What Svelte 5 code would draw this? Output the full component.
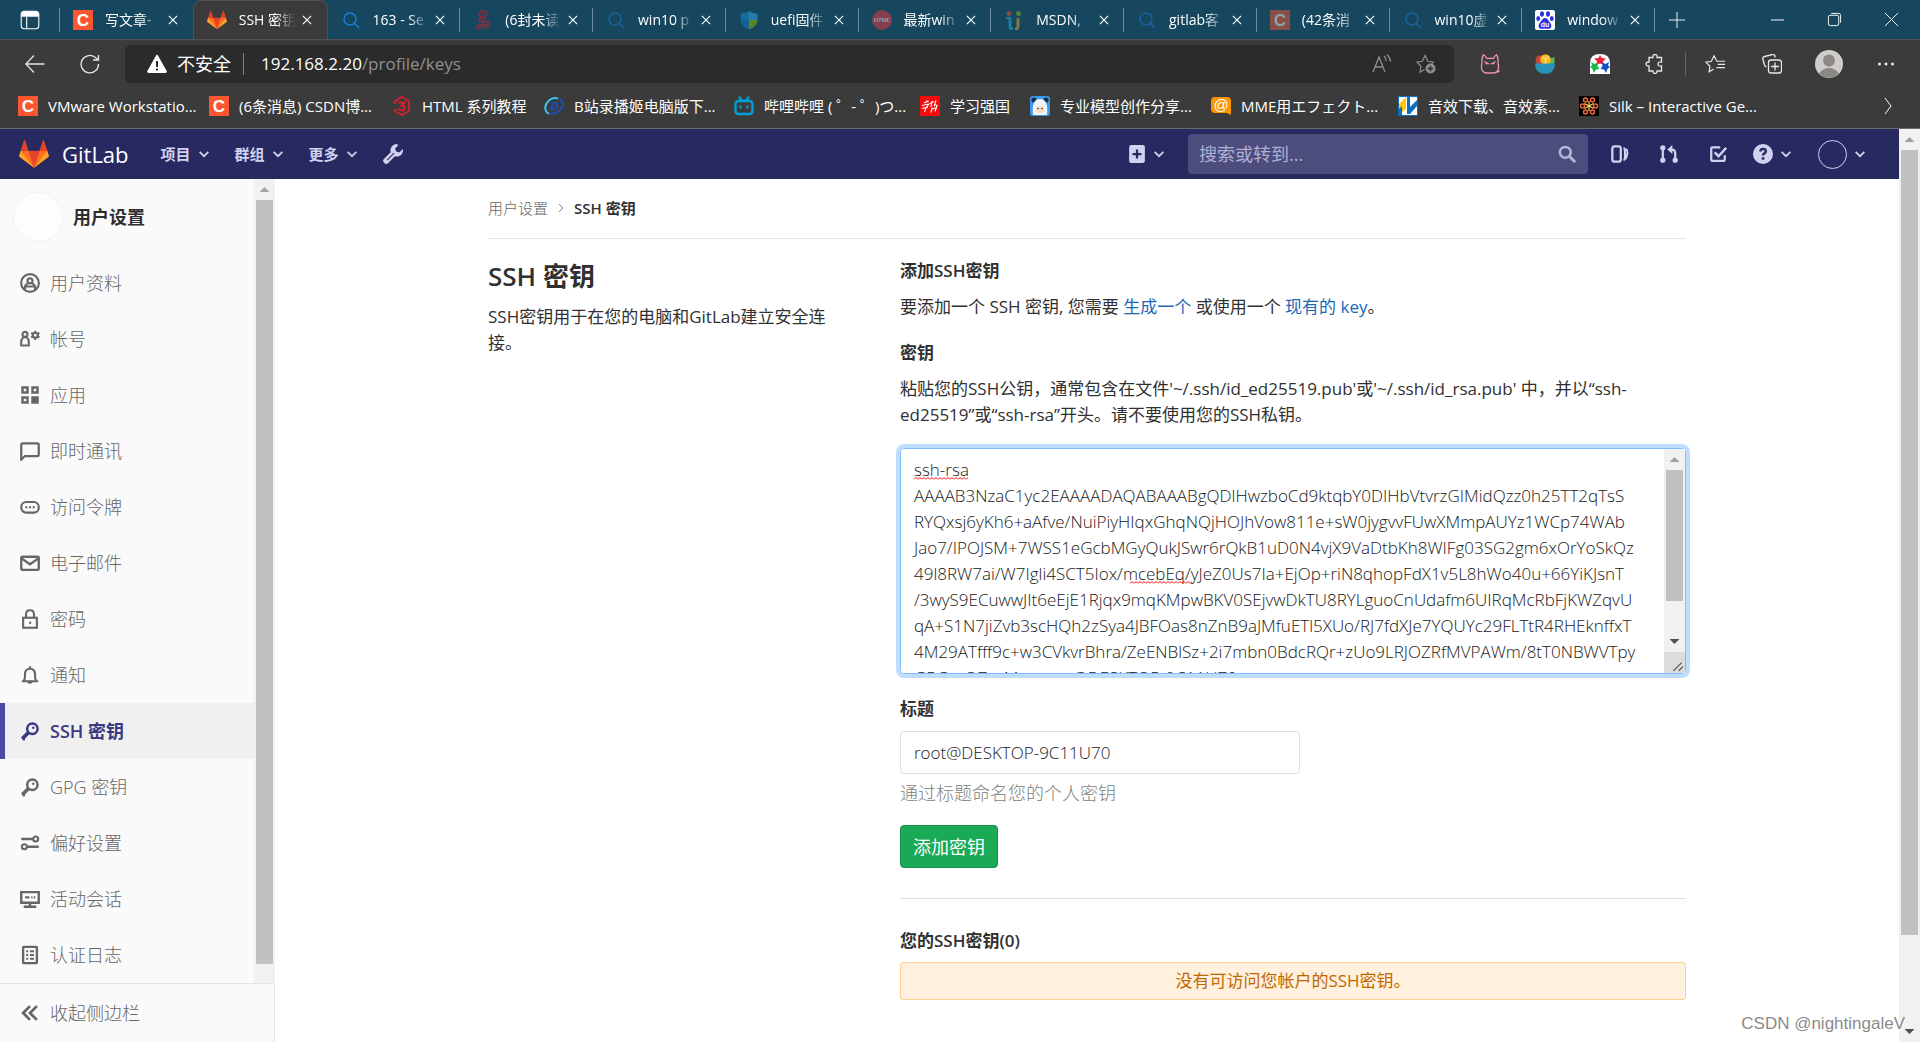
<script lang="ts">
  const tanuki = `
    <path fill="#e24329" d="M2 14l9.38 9v-9l-4-12.28c-.2-.63-1.18-.63-1.38 0zM34 14l-9.38 9v-9l4-12.28c.2-.63 1.18-.63 1.38 0zM18 34.38L3 14h30z"/>
    <path fill="#fc6d26" d="M18 34.38L11.38 14H2l4 11zM18 34.38L24.62 14H34l-4 11z"/>
    <path fill="#fca326" d="M2 14L.1 20.16c-.18.56 0 1.2.5 1.56L18 34.38zM34 14l1.9 6.16c.18.56 0 1.2-.5 1.56L18 34.38z"/>`;

  const csdn = `
    <rect width="20" height="20" fill="#fc5531"/>
    <text x="10" y="16" font-size="17" font-weight="700" text-anchor="middle" fill="#fff">C</text>`;

  const magnifier = `<g fill="none" stroke="#1a7fe0" stroke-width="1.4"><circle cx="9" cy="9" r="6"/><path d="M13.500 13.500L18 18"/></g>`;

  // 20x20 site icons
  const favicons: Record<string, string> = {
    csdn,
    search: magnifier,
    netease: `<g fill="none" stroke="#e01b26" stroke-width="2"><circle cx="10" cy="4.500" r="3.600"/><path d="M11 4.500H9M12 7.500c-6-1-8 4-3 4h5c4 0 3 4-1 3.500H7c-4 0-4 4 0 4M10 12c1 3 0 5-2 7M15 14c0 3-1 4-3 5"/></g>`,
    shield: `<path fill="#1a8fd8" d="M10 1C7 3 4 3.500 1.500 3.500V10H10z"/><path fill="#2fb0f0" d="M10 1c3 2 6 2.500 8.500 2.500V10H10z"/><path fill="#147ac4" d="M1.500 10c.5 5 4 8 8.500 9.500V10z"/><path fill="#9bc400" d="M18.500 10c-.5 5-4 8-8.500 9.500V10z"/>`,
    html: `<circle cx="10" cy="10" r="10" fill="#f0383c"/><text x="10" y="12" font-size="6" font-weight="700" font-style="italic" text-anchor="middle" fill="#fff">HTML</text>`,
    msdn: `<g fill="none" stroke-width="3"><path stroke="#29b6d8" d="M6 8v8c0 2 1 3 3 3"/><path stroke="#e0b020" d="M14 8v8c0 2-1 3-3 3"/></g><circle cx="5" cy="3.500" r="2.500" fill="#e2562b"/><circle cx="14.500" cy="3.500" r="2.500" fill="#7dbb2b"/><path stroke="#29b6d8" stroke-width="2" d="M2 8h5"/>`,
    baidu: `<rect width="20" height="20" rx="2" fill="#fff"/><g fill="#2932e1"><ellipse cx="7" cy="4" rx="2" ry="2.800"/><ellipse cx="13" cy="4" rx="2" ry="2.800"/><ellipse cx="3.200" cy="8.500" rx="1.900" ry="2.500"/><ellipse cx="16.800" cy="8.500" rx="1.900" ry="2.500"/><path d="M10 8c2 0 3 2 4.500 4s2.500 3 1.500 5.500c-1 2-4 1-6 1s-5 1-6-1C3 15 4 14 5.500 12S8 8 10 8z"/></g><text x="10" y="17" font-size="7" font-weight="700" text-anchor="middle" fill="#fff">du</text>`,
    series: `<path fill="none" stroke="#cf2230" stroke-width="2" d="M3 8V5L10 1l7 4v10l-7 4-7-4v-2"/><path fill="none" stroke="#cf2230" stroke-width="2" d="M6 6.500h6.500L9.500 9.500c4 0 4 5 0 5L6 13"/>`,
    recorder: `<g fill="none"><path stroke="#3cc0ee" stroke-width="2" d="M5 18C0 15 0 9 5 4.500c3-3 7-3 9-2"/><path stroke="#1d4fb0" stroke-width="2" d="M15 2.500c5 3 5 8 0 12.500-3 3-6 3-8 2M9 7l4-.5c1 3-1 6.500-3.500 6.500H7z"/></g>`,
    bilibili: `<g fill="none" stroke="#00a1d6" stroke-width="2.400" stroke-linecap="round"><rect x="1.500" y="5" width="17" height="13" rx="3"/><path d="M5.500 1.500L8 4.500M14.500 1.500L12 4.500"/></g><path stroke="#00a1d6" stroke-width="2" d="M6.500 9.500v3M13.500 9.500v3"/>`,
    xuexi: `<rect width="20" height="20" fill="#f40b0b"/><g stroke="#fff" stroke-width="1.100" fill="none"><path d="M4 7l5-2M7 4.500L6 6M2 9.500l7-1.500-3 4-1.500 4M2 12.500l6-1.500M12 5l-1 6M10 7.500l4-2M16 4.500l-2 6M11 13.500l6-2M12 11.500l-1 5M15 8.500l2 1-2 6"/></g>`,
    model: `<rect width="20" height="20" rx="3" fill="#3c9ae8"/><circle cx="4" cy="4" r="2.600" fill="#17314e"/><circle cx="16" cy="4" r="2.600" fill="#17314e"/><path fill="#eef6fb" d="M3 19C2 8 4 3 10 3s8 5 7 16z"/><path fill="#f7dcc9" d="M6 10h8v5c-2 3-6 3-8 0z"/><path stroke="#6b4a3f" d="M7 12.500h2M11 12.500h2"/>`,
    mme: `<path fill="#fb9500" d="M4 1h12q4 0 4 4v14l-4-2H4q-4 0-4-4V5q0-4 4-4z"/><text x="10" y="14" font-size="15" text-anchor="middle" fill="#fff">@</text>`,
    audio: `<rect width="20" height="20" fill="#fff"/><path fill="#ffc80a" d="M1 8l7-7v12l-7 6z"/><path fill="#0a6ebd" d="M9 1h3v17H9zM12 11l7-7v6l-7 8zM0 0h20v1H0zM0 19h20v1H0zM0 0h1v20H0zM19 0h1v20h-1zM1 13l3-3v9H1z"/>`,
    silk: `<rect width="20" height="20" fill="#000"/><g fill="none" stroke="#f0683a" stroke-width="1.500"><circle cx="6.500" cy="4" r="2"/><circle cx="13.500" cy="4" r="2"/><circle cx="3.500" cy="10" r="2"/><circle cx="16.500" cy="10" r="2"/><circle cx="6.500" cy="16" r="2"/><circle cx="13.500" cy="16" r="2"/></g><path stroke="#ffd75e" stroke-width="1.200" d="M10 5v10M5.500 7.500l9 5M14.500 7.500l-9 5"/>`,
  };

  // 16x16 line icons, drawn in the current colour
  const icons: Record<string, string> = {
    close: `<path d="M2.500 2.500l11 11M13.500 2.500l-11 11"/>`,
    chevron: `<path stroke-width="2" d="M3 5.500l5 5 5-5"/>`,
    wrench: `<path fill="currentColor" stroke="none" fill-rule="evenodd" d="M10.700 0a5 5 0 0 0-4.500 6.500L.9 11.800a2.300 2.300 0 0 0 3.300 3.300l5.300-5.300A5 5 0 0 0 15.900 4L13 6.800 10.500 6 9.700 3.500 12.300.8A5 5 0 0 0 10.700 0zM3 12.500l5.500-5.500.6.6L3.600 13.100z"/>`,
    plus: `<path fill="currentColor" stroke="none" fill-rule="evenodd" d="M3 0h10a2 2 0 0 1 2 2v12a2 2 0 0 1-2 2H3a2 2 0 0 1-2-2V2a2 2 0 0 1 2-2zM7 4v3H4v2h3v3h2V9h3V7H9V4z"/>`,
    search: `<circle cx="6.500" cy="6.500" r="4.800" stroke-width="2.200"/><path stroke-width="2.600" stroke-linecap="round" d="M10.500 10.500l4 4"/>`,
    issues: `<rect x="1.200" y="1.200" width="7.500" height="13.600" rx="2" stroke-width="2"/><path stroke-width="2" d="M11 3q1.500 0 1.500 2v6q0 2-1.500 2"/><path stroke-width="1.600" d="M13.500 3.500q1.800 2 .8 5.500l-1.300 3.500"/>`,
    merge: `<circle cx="2.500" cy="2.500" r="1.500" fill="currentColor"/><circle cx="2.500" cy="13.500" r="1.500" fill="currentColor"/><circle cx="13.500" cy="13.500" r="1.500" fill="currentColor"/><path stroke-width="2" d="M2.500 3v10M13.500 13V7q0-3-3-3H9"/><path fill="currentColor" stroke="none" d="M11 0v8L6.500 4z"/>`,
    todo: `<path stroke-width="2" d="M10 2H3q-1 0-1 1v10q0 1 1 1h10q1 0 1-1V9"/><path stroke-width="2.200" d="M5 6.500l3.500 3.500L15.300 2.500"/>`,
    help: `<path fill="currentColor" stroke="none" fill-rule="evenodd" d="M8 0a8 8 0 1 1 0 16A8 8 0 0 1 8 0zM5 6h2q0-1.200 1-1.200 1.200 0 1.200 1 0 .7-1 1.200-1.200.6-1.200 2.200h2q0-.8 1-1.300 1.200-.7 1.200-2.200Q11.200 3 8 3 5 3 5 6zM8 10.300a1.200 1.200 0 1 0 .1 0z"/>`,
    profile: `<circle cx="8" cy="8" r="7.100"/><circle cx="8" cy="6.300" r="2"/><path d="M4 13.500V11q0-1 1-1.800L6.500 8M12 13.500V11q0-1-1-1.800L9.500 8M4 10.800h8"/>`,
    account: `<circle cx="4" cy="4.300" r="2"/><path d="M1 13.200V9.500q0-2 3-3.200 3 1.200 3 3.200v3.700z"/><circle cx="12.200" cy="5" r="2"/><path stroke-width="1.600" d="M12.200 1.300v1.700M12.200 7v1.700M9 3.200l1.500.8M14 6l1.500.8M9 6.800l1.500-.8M14 4l1.500-.8"/>`,
    apps: `<g stroke-width="2"><rect x="2" y="2" width="4" height="4"/><rect x="10" y="2" width="4" height="4"/><rect x="2" y="10" width="4" height="4"/><rect x="10" y="10" width="4" height="4" fill="currentColor"/></g>`,
    chat: `<path stroke-width="1.800" d="M1 14.800V3q0-1.200 1.200-1.200h11.600q1.200 0 1.200 1.200v7.800q0 1.200-1.200 1.200H4z"/>`,
    token: `<rect x="1" y="4" width="14" height="8.500" rx="4"/><path stroke-width="1.600" d="M4.200 8.200h1.600M7.200 8.200h1.600M10.200 8.200h1.600"/>`,
    mail: `<rect x="1" y="3" width="14" height="10.500" rx="1" stroke-width="1.900"/><path stroke-width="1.900" d="M1.500 4.500L8 9l6.500-4.500"/>`,
    lock: `<rect x="2.500" y="7" width="11" height="8"/><path d="M4.800 7V4.500q0-3.500 3.200-3.500t3.200 3.500V7M7.200 11h1.800"/>`,
    bell: `<path d="M1.500 13h13M3 12.500q1-1 1-5Q4 3 8 3t4 4.500q0 4 1 5M8 1v2"/><path fill="currentColor" stroke="none" d="M5.500 13h5q-.5 2-2.500 2t-2.500-2z"/>`,
    key: `<circle cx="9.900" cy="6.200" r="4.200" stroke-width="2"/><path stroke-width="3" d="M6.800 9.200L1.800 14.200"/><path stroke-width="2" d="M3 12.200v3.300"/><circle cx="10.600" cy="5.400" r="1" fill="currentColor" stroke="none"/>`,
    sliders: `<circle cx="12.500" cy="4.800" r="2"/><circle cx="3.500" cy="11" r="2"/><path stroke-width="2" d="M1 4.800h9.500M5.500 11H15"/>`,
    monitor: `<path stroke-width="1.900" d="M1 2.500h14v8.500H1zM8 11v3M3 14.200h10M4 6.700h3.500M9 6.700h1M11 6.700h1.200"/>`,
    log: `<rect x="2.500" y="1.500" width="11" height="13" rx=".5" stroke-width="1.900"/><path stroke-width="1.600" d="M5 5h1.600M5 8h1.600M5 11h1.600M8 5h3.200M8 8h3.200M8 11h3.200"/>`,
    collapse: `<path stroke-width="2.200" d="M8 2.500L2.500 8 8 13.500M13.500 2.500L8 8l5.500 5.500"/>`,
  };

  const tabs = [
    { title: '写文章-', icon: 'csdn' },
    { title: 'SSH 密钥', icon: 'gitlab', active: true },
    { title: '163 - Se', icon: 'search' },
    { title: '(6封未读', icon: 'netease', dim: true },
    { title: 'win10 p', icon: 'search', dim: true },
    { title: 'uefi固件', icon: 'shield', dim: true },
    { title: '最新win', icon: 'html', dim: true },
    { title: 'MSDN,', icon: 'msdn', dim: true },
    { title: 'gitlab客', icon: 'search', dim: true },
    { title: '(42条消', icon: 'csdn', dim: true },
    { title: 'win10虚', icon: 'search', dim: true },
    { title: 'window', icon: 'baidu' },
  ];

  const bookmarks = [
    { title: 'VMware Workstatio...', icon: 'csdn', width: 191 },
    { title: '(6条消息) CSDN博...', icon: 'csdn', width: 183 },
    { title: 'HTML 系列教程', icon: 'series', width: 152 },
    { title: 'B站录播姬电脑版下...', icon: 'recorder', width: 190 },
    { title: '哔哩哔哩 ( ゜- ゜)つ...', icon: 'bilibili', width: 186 },
    { title: '学习强国', icon: 'xuexi', width: 110 },
    { title: '专业模型创作分享...', icon: 'model', width: 181 },
    { title: 'MME用エフェクト...', icon: 'mme', width: 187 },
    { title: '音效下载、音效素...', icon: 'audio', width: 181 },
    { title: 'Silk – Interactive Ge...', icon: 'silk', width: 181 },
  ];

  const menus = ['项目', '群组', '更多'];

  const sections = [
    { label: '用户资料', icon: 'profile' },
    { label: '帐号', icon: 'account' },
    { label: '应用', icon: 'apps' },
    { label: '即时通讯', icon: 'chat' },
    { label: '访问令牌', icon: 'token' },
    { label: '电子邮件', icon: 'mail' },
    { label: '密码', icon: 'lock' },
    { label: '通知', icon: 'bell' },
    { label: 'SSH 密钥', icon: 'key', active: true },
    { label: 'GPG 密钥', icon: 'key' },
    { label: '偏好设置', icon: 'sliders' },
    { label: '活动会话', icon: 'monitor' },
    { label: '认证日志', icon: 'log' },
  ];

  let key = $state(
    [
      'ssh-rsa',
      'AAAAB3NzaC1yc2EAAAADAQABAAABgQDlHwzboCd9ktqbY0DIHbVtvrzGIMidQzz0h25TT2qTsS',
      'RYQxsj6yKh6+aAfve/NuiPiyHIqxGhqNQjHOJhVow811e+sW0jygvvFUwXMmpAUYz1WCp74WAb',
      'Jao7/IPOJSM+7WSS1eGcbMGyQukJSwr6rQkB1uD0N4vjX9VaDtbKh8WIFg03SG2gm6xOrYoSkQz',
      '49l8RW7ai/W7Igli4SCT5Iox/mcebEq/yJeZ0Us7Ia+EjOp+riN8qhopFdX1v5L8hWo40u+66YiKJsnT',
      '/3wyS9ECuwwJIt6eEjE1Rjqx9mqKMpwBKV0SEjvwDkTU8RYLguoCnUdafm6UIRqMcRbFjKWZqvU',
      'qA+S1N7jiZvb3scHQh2zSya4JBFOas8nZnB9aJMfuETl5XUo/RJ7fdXJe7YQUYc29FLTtR4RHEknffxT',
      '4M29ATfff9c+w3CVkvrBhra/ZeENBlSz+2i7mbn0BdcRQr+zUo9LRJOZRfMVPAWm/8tT0NBWVTpy',
      'GRGzcQZxzMs= root@DESKTOP-9C11U70',
    ].join('\n')
  );
  let title = $state('root@DESKTOP-9C11U70');
  let query = $state('');
</script>

{#snippet icon(name: string)}
  <svg class="icon {name}" viewBox="0 0 16 16" aria-hidden="true">{@html icons[name]}</svg>
{/snippet}

{#snippet favicon(name: string)}
  {#if name === 'gitlab'}
    <svg class="favicon" viewBox="0 0 36 36" aria-hidden="true">{@html tanuki}</svg>
  {:else}
    <svg class="favicon" viewBox="0 0 20 20" aria-hidden="true">{@html favicons[name]}</svg>
  {/if}
{/snippet}

<div class="window">
  <div class="tab-bar">
    <button class="tab-menu" aria-label="Tab actions">
      <svg viewBox="0 0 20 20"><rect x="2" y="2" width="16" height="16" rx="3" /><path d="M7 7v11" /><path class="solid" d="M2 7V5q0-3 3-3h10q3 0 3 3v2z" /></svg>
    </button>
    <div class="tabs">
      {#each tabs as tab}
        <div class="tab" class:active={tab.active} class:dim={tab.dim}>
          {@render favicon(tab.icon)}
          <span class="tab-title">{tab.title}</span>
          <button class="tab-close" aria-label="Close tab">{@render icon('close')}</button>
        </div>
      {/each}
    </div>
    <button class="new-tab" aria-label="New tab">
      <svg viewBox="0 0 20 20"><path d="M10 1v18M1 10h18" /></svg>
    </button>
    <div class="window-controls">
      <button aria-label="Minimize"><svg viewBox="0 0 16 16"><path d="M1 8.500h14" /></svg></button>
      <button aria-label="Restore"><svg viewBox="0 0 16 16"><rect x="1.500" y="3.500" width="11" height="11" rx="2" /><path d="M4.500 1.500h8q2 0 2 2v8" /></svg></button>
      <button aria-label="Close"><svg viewBox="0 0 16 16"><path d="M1 1l14 14M15 1L1 15" /></svg></button>
    </div>
  </div>

  <div class="toolbar">
    <button aria-label="Back"><svg viewBox="0 0 20 20"><path d="M19.500 10H1M9 1.500L.8 10 9 18.500" /></svg></button>
    <button aria-label="Reload"><svg viewBox="0 0 20 20"><path d="M18.500 10A8.700 8.700 0 1 1 15 3.200L17.500 5M18.500 1v5h-5.500" /></svg></button>
    <div class="address">
      <svg class="warning" viewBox="0 0 20 20"><path d="M9 1.500q1-1.500 2 0l8.700 15.500q.6 1.700-1.200 2h-17q-1.800-.3-1.200-2z" /><path class="mark" d="M10 7v6M10 14.500v2" /></svg>
      <span class="insecure">不安全</span>
      <span class="url"><b>192.168.2.20</b>/profile/keys</span>
      <button aria-label="Read aloud"><svg viewBox="0 0 20 20"><path d="M1 18L7 3l6 15M3 13h8M12 2q2 2 2 5M15 .8q3.500 3 3.500 7" /></svg></button>
      <button aria-label="Add to favorites">
        <svg viewBox="0 0 22 22"><path d="M9.500 17l-5 3 1-6.500L1 9l6-1 3-6.500L13 8l6 1-1.500 1.500" /><circle class="solid" cx="16" cy="16" r="5.500" /><path class="dark" d="M16 13v6M13 16h6" /></svg>
      </button>
    </div>
    <div class="extensions">
      <button aria-label="Cat extension">
        <svg viewBox="0 0 20 20"><path stroke="#f093ae" d="M2 9Q1.500 3 3.500.8q2 .7 3 3.500h7q1-2.800 3-3.500Q18.500 3 18 9q2 9-4 10H6Q0 18 2 9zM4.500 7.500l3.500 2H5.500M15.500 7.500l-3.500 2h2.500M17 18q2 0 2.500-1.500" /></svg>
      </button>
      <button aria-label="Salad extension">
        <svg viewBox="0 0 20 20"><g stroke="none"><circle cx="5" cy="6" r="4.600" fill="#c8453a" /><path fill="#5cb84a" d="M14 10V5l5.500-2q.5 4-.5 7z" /><circle cx="10.500" cy="5.500" r="5.300" fill="#f7b71d" /><path fill="#2793b8" d="M0 9.500h20q0 7-6 10H6Q0 16.500 0 9.500z" /></g><path stroke="#fbe08a" d="M10.500 5.500l3-3M10.500 5.500L8 3M10.500 5.500v4" /></svg>
      </button>
      <button aria-label="Star extension">
        <svg viewBox="0 0 20 20"><g stroke="none"><path fill="#fff" d="M0 20V9q0-9 10-9t10 9v11z" /><path fill="#f0203c" d="M10 1l1.800 3 4.200.5-3 3 1 3.500-4-1.500L6.500 11l.5-4-3-2.500L8.500 4z" /><path fill="#14b84c" d="M1 8l3.500 2L8 8.500 7.500 12l2 3-3.500.5L4 19l-1.500-4L0 13l2-1.500z" /><path fill="#1450c8" d="M19 8l-3.500 2L12 8.500l.5 3.500-2 3 3.500.5L16 19l1.500-4 2.500-2-2-1.500z" /></g></svg>
      </button>
      <button aria-label="Extensions">
        <svg viewBox="0 0 20 20"><path d="M4 3.500h4q-.5-3 2-3t2 3h4.500V8q-3.500-.5-3.500 2t3.500 2v5H12q0 2.500-2 2.500T8 17H4v-5q-3 0-3-2t3-2z" /></svg>
      </button>
    </div>
    <div class="tools">
      <button aria-label="Favorites">
        <svg viewBox="0 0 22 20"><path d="M9.500 15.500l-5 3 1-6L1 8l6-1 3-6 3 6h1.500M14 10.500h8M14 7h8M12.500 14H22" /></svg>
      </button>
      <button aria-label="Collections">
        <svg viewBox="0 0 20 20"><rect x="6.500" y="6" width="13" height="13" rx="2.500" /><path d="M13 8.500v8M9 12.500h8M4.500 13Q3 12.500 2.500 11L.8 5Q.5 3 2.500 2.500l8-2q2-.3 2.500 1.500v1.500" /></svg>
      </button>
      <button class="person" aria-label="Profile">
        <svg viewBox="0 0 28 28"><circle cx="14" cy="14" r="14" fill="#cfcdca" stroke="none" /><circle cx="14" cy="10.500" r="6" fill="#8a8784" stroke="none" /><path fill="#8a8784" stroke="none" d="M4 23.500Q8 18 14 18t10 5.500a14 14 0 0 1-20 0z" /></svg>
      </button>
      <button aria-label="More"><svg viewBox="0 0 20 20"><g class="solid"><circle cx="3.500" cy="10" r="1.500" /><circle cx="10" cy="10" r="1.500" /><circle cx="16.500" cy="10" r="1.500" /></g></svg></button>
    </div>
  </div>

  <div class="bookmarks">
    {#each bookmarks as bookmark}
      <a href="#bookmark" style:width="{bookmark.width}px">
        {@render favicon(bookmark.icon)}
        <span>{bookmark.title}</span>
      </a>
    {/each}
    <button aria-label="More bookmarks"><svg viewBox="0 0 16 16"><path d="M5 0l6 8-6 8" /></svg></button>
  </div>

  <div class="viewport">
    <div class="page">
      <header class="navbar">
        <a class="brand" href="#home">
          <svg viewBox="0 0 36 36" aria-hidden="true">{@html tanuki}</svg>
          GitLab
        </a>
        <nav>
          {#each menus as menu}
            <button>{menu} {@render icon('chevron')}</button>
          {/each}
          <button class="large" aria-label="Admin">{@render icon('wrench')}</button>
        </nav>
        <button class="create" aria-label="New">{@render icon('plus')}{@render icon('chevron')}</button>
        <div class="search-box">
          <input type="text" aria-label="搜索" placeholder="搜索或转到..." bind:value={query} />
          {@render icon('search')}
        </div>
        <div class="shortcuts">
          <button aria-label="Issues">{@render icon('issues')}</button>
          <button aria-label="Merge requests">{@render icon('merge')}</button>
          <button aria-label="To-Do">{@render icon('todo')}</button>
        </div>
        <button class="large help-menu" aria-label="Help">{@render icon('help')}{@render icon('chevron')}</button>
        <button class="user" aria-label="User"><span class="avatar"></span>{@render icon('chevron')}</button>
      </header>

      <div class="content">
        <aside>
          <div class="side-scroll">
            <div class="side-list">
              <a class="side-title" href="#profile"><span class="avatar"></span>用户设置</a>
              {#each sections as section}
                <a class="side-item" class:active={section.active} href="#section">
                  {@render icon(section.icon)}
                  {section.label}
                </a>
              {/each}
            </div>
            <div class="scrollbar">
              <i class="arrow up"></i>
              <div class="thumb"></div>
            </div>
          </div>
          <button class="collapse-toggle">{@render icon('collapse')}收起侧边栏</button>
        </aside>

        <main>
          <div class="container">
            <div class="breadcrumbs">
              <a href="#profile">用户设置</a>
              <svg viewBox="0 0 8 8" aria-hidden="true"><path d="M2 0l4 4-4 4" /></svg>
              <strong>SSH 密钥</strong>
            </div>
            <div class="row">
              <section class="intro">
                <h4>SSH 密钥</h4>
                <p>SSH密钥用于在您的电脑和GitLab建立安全连接。</p>
              </section>
              <section class="settings">
                <h5>添加SSH密钥</h5>
                <p>
                  要添加一个 SSH 密钥, 您需要 <a href="#generate">生成一个</a> 或使用一个
                  <a href="#existing">现有的 key</a>。
                </p>
                <form onsubmit={(e) => e.preventDefault()}>
                  <label for="key">密钥</label>
                  <p>
                    粘贴您的SSH公钥，通常包含在文件'~/.ssh/id_ed25519.pub'或'~/.ssh/id_rsa.pub' 中，并以“ssh-ed25519”或“ssh-rsa”开头。请不要使用您的SSH私钥。
                  </p>
                  <div class="key-box">
                    <textarea id="key" spellcheck="false" bind:value={key}></textarea>
                    <i class="squiggle first"></i>
                    <i class="squiggle second"></i>
                    <div class="scrollbar">
                      <i class="arrow up"></i>
                      <div class="thumb"></div>
                      <i class="arrow down"></i>
                      <svg viewBox="0 0 20 20" aria-hidden="true"><path d="M9 18l8-8M14 18l4-4" /></svg>
                    </div>
                  </div>
                  <label for="title">标题</label>
                  <input id="title" type="text" bind:value={title} />
                  <p class="hint">通过标题命名您的个人密钥</p>
                  <button class="submit" type="submit">添加密钥</button>
                </form>
                <hr />
                <h5>您的SSH密钥(0)</h5>
                <div class="empty">没有可访问您帐户的SSH密钥。</div>
              </section>
            </div>
          </div>
        </main>
      </div>
    </div>
    <div class="scrollbar page-scrollbar">
      <i class="arrow up"></i>
      <div class="thumb"></div>
      <i class="arrow down"></i>
    </div>
  </div>
  <div class="watermark">CSDN @nightingaleV</div>
</div>

<style>
  :global(body) {
    background: #fff;
  }
  .window {
    display: flex;
    flex-direction: column;
    height: 100vh;
    position: relative;
    overflow: hidden;
    color: #303030;
    font-family: 'Open Sans', 'Noto Sans CJK SC', sans-serif;
    font-size: 17px;
    line-height: 26px;
  }
  .window :global(*) {
    box-sizing: border-box;
  }
  button {
    display: flex;
    align-items: center;
    justify-content: center;
    flex: none;
    padding: 0;
    border: 0;
    background: none;
    color: inherit;
    font: inherit;
    cursor: pointer;
  }
  a {
    color: #1b69b6;
    text-decoration: none;
  }
  p,
  h4,
  h5 {
    margin: 0;
  }
  svg {
    flex: none;
    fill: none;
    stroke: currentColor;
  }
  .icon {
    width: 20px;
    height: 20px;
    stroke-width: 1.7;
  }
  .favicon {
    width: 20px;
    height: 20px;
    stroke: none;
    font-family: 'Liberation Sans', sans-serif;
  }
  .solid {
    fill: currentColor;
    stroke: none;
  }

  /* browser chrome */
  .tab-bar {
    display: flex;
    flex: none;
    height: 39px;
    background: #16475f;
    color: #fff;
    font-size: 14px;
  }
  .tab-menu {
    width: 60px;
    border-right: 1px solid #6a8b9a;
    margin: 8px 0 7px;
  }
  .tab-menu svg {
    width: 22px;
    height: 22px;
  }
  .tabs {
    display: flex;
    flex: 0 1 1595px;
    min-width: 0;
  }
  .tab {
    display: flex;
    align-items: center;
    flex: 1;
    min-width: 0;
    padding: 0 14px 0 13px;
    background: linear-gradient(#6a8b9a, #6a8b9a) right center / 1px 24px no-repeat;
  }
  .tab:first-child {
    background: none;
  }
  .tab.active {
    background: #3b3b3b;
    border: 1px solid #505050;
    border-bottom: 0;
    border-radius: 8px 8px 0 0;
  }
  .tab.dim .favicon {
    opacity: 0.5;
  }
  .tab-title {
    flex: 1;
    margin: 0 4px 0 12px;
    overflow: hidden;
    white-space: nowrap;
    mask-image: linear-gradient(to right, #000 36px, transparent 56px);
  }
  .tab-close .icon {
    width: 12px;
    height: 12px;
    stroke-width: 1.5;
  }
  .new-tab {
    width: 44px;
  }
  .new-tab svg {
    width: 18px;
    height: 18px;
  }
  .window-controls {
    display: flex;
    margin-left: auto;
  }
  .window-controls button {
    width: 57px;
  }
  .window-controls svg {
    width: 15px;
    height: 15px;
  }
  .toolbar {
    display: flex;
    align-items: center;
    flex: none;
    height: 49px;
    padding: 0 6px 0 7px;
    border-top: 1px solid #505050;
    background: #3b3b3b;
    color: #e8e8e8;
  }
  .toolbar > button {
    width: 55px;
  }
  .toolbar svg {
    width: 20px;
    height: 20px;
    stroke-width: 1.3;
  }
  .address {
    display: flex;
    align-items: center;
    flex: 1;
    height: 38px;
    margin-left: 8px;
    padding: 0 18px 0 22px;
    border-radius: 6px;
    background: #2b2b2b;
    color: #909090;
    font-size: 18px;
  }
  .address button {
    margin-left: 24px;
  }
  .address .warning {
    fill: #fff;
    stroke: none;
  }
  .warning .mark {
    stroke: #2b2b2b;
    stroke-width: 2;
  }
  .address .dark {
    stroke: #2b2b2b;
    stroke-width: 1.6;
  }
  .insecure {
    margin-left: 10px;
    padding-right: 12px;
    border-right: 1px solid #808080;
    color: #fff;
    line-height: 22px;
  }
  .url {
    flex: 1;
    margin-left: 17px;
    font-size: 17px;
  }
  .url b {
    color: #fff;
    font-weight: 400;
  }
  .extensions,
  .tools {
    display: flex;
    align-items: center;
    height: 24px;
  }
  .extensions {
    padding: 0 3px 0 8px;
    border-right: 1px solid #666;
  }
  .extensions button {
    width: 55px;
  }
  .tools button {
    width: 57px;
  }
  .toolbar .person svg {
    width: 28px;
    height: 28px;
  }
  .bookmarks {
    display: flex;
    flex: none;
    height: 41px;
    padding: 0 22px 5px 18px;
    border-bottom: 1px solid #6b6b6b;
    background: #3b3b3b;
    color: #fff;
    font-size: 15px;
  }
  .bookmarks a {
    display: flex;
    align-items: center;
    gap: 10px;
    color: #fff;
    white-space: nowrap;
  }
  .bookmarks button {
    margin-left: auto;
  }
  .bookmarks button svg {
    width: 20px;
    height: 16px;
  }

  /* scrollbars */
  .scrollbar {
    display: flex;
    flex-direction: column;
    align-items: center;
    flex: none;
    width: 21px;
    background: #f1f1f1;
  }
  .thumb {
    width: 17px;
    background: #c1c1c1;
  }
  .arrow {
    flex: none;
    width: 10px;
    height: 5px;
    margin: 8px 0;
    background: #a3a3a3;
    clip-path: polygon(50% 0, 100% 100%, 0 100%);
  }
  .arrow.down {
    margin-top: auto;
    background: #505050;
    clip-path: polygon(0 0, 100% 0, 50% 100%);
  }
  .page-scrollbar .thumb {
    flex: 0 0 86%;
  }
  .side-scroll .thumb {
    flex: 0 0 95%;
  }

  /* gitlab */
  .viewport {
    display: flex;
    flex: 1;
    min-height: 0;
  }
  .page {
    display: flex;
    flex-direction: column;
    flex: 1;
    min-width: 0;
  }
  .navbar {
    display: flex;
    align-items: center;
    flex: none;
    height: 50px;
    padding: 0 32px 0 18px;
    background: #292961;
    color: #d1d1f0;
    font-size: 15px;
    font-weight: 700;
  }
  .navbar button {
    gap: 6px;
  }
  .navbar .icon {
    width: 18px;
    height: 18px;
  }
  .navbar .icon:global(.chevron) {
    width: 14px;
    height: 14px;
  }
  .brand {
    display: flex;
    align-items: center;
    gap: 12px;
    color: #fff;
    font-size: 22px;
    font-weight: 400;
  }
  .brand svg {
    width: 32px;
    height: 30px;
    stroke: none;
  }
  nav {
    display: flex;
    align-items: center;
    gap: 24px;
    margin-left: 32px;
  }
  .navbar .large .icon:first-child {
    width: 20px;
    height: 20px;
  }
  .create {
    margin-left: auto;
  }
  .search-box {
    display: flex;
    align-items: center;
    width: 400px;
    height: 40px;
    margin-left: 22px;
    padding: 0 12px 0 11px;
    border-radius: 4px;
    background: #4c4c7d;
    color: #b5b5d8;
  }
  .search-box input {
    flex: 1;
    min-width: 0;
    padding: 0;
    border: 0;
    outline: 0;
    background: none;
    color: #fff;
    font: 400 18px 'Open Sans', 'Noto Sans CJK SC', sans-serif;
  }
  .search-box input::placeholder {
    color: #b0b0d4;
    opacity: 1;
  }
  .shortcuts {
    display: flex;
    gap: 31px;
    margin-left: 23px;
  }
  .help-menu {
    margin-left: 26px;
  }
  .user {
    margin-left: 25px;
  }
  .user .avatar {
    width: 29px;
    height: 29px;
    border: 1px solid #d1d1f0;
    border-radius: 50%;
  }
  .content {
    display: flex;
    flex: 1;
    min-height: 0;
  }
  aside {
    display: flex;
    flex-direction: column;
    flex: none;
    width: 275px;
    background: #fafafa;
    color: #666;
    font-size: 18px;
    font-weight: 300;
  }
  .side-scroll {
    display: flex;
    flex: 1;
    min-height: 0;
  }
  .side-list {
    flex: 1;
    overflow: hidden;
  }
  .side-title {
    display: flex;
    align-items: center;
    gap: 10px;
    height: 76px;
    padding-left: 13px;
    color: #2e2e2e;
    font-weight: 700;
  }
  .side-title .avatar {
    width: 50px;
    height: 50px;
    border: 1px solid #f2f2f2;
    border-radius: 50%;
    background: #fdfdfd;
  }
  .side-item {
    display: flex;
    align-items: center;
    gap: 10px;
    height: 56px;
    padding-left: 20px;
    color: #666;
  }
  .side-item.active {
    padding-left: 15px;
    border-left: 5px solid #4b4ba3;
    background: #f0f0f0;
    color: #393982;
    font-weight: 600;
  }
  .collapse-toggle {
    justify-content: flex-start;
    gap: 10px;
    height: 59px;
    padding-left: 20px;
    border-top: 1px solid #e5e5e5;
    border-right: 1px solid #e5e5e5;
  }
  main {
    flex: 1;
    min-width: 0;
    overflow: hidden;
  }
  .container {
    max-width: 1198px;
    margin: 0 auto;
  }
  .breadcrumbs {
    display: flex;
    align-items: center;
    gap: 9px;
    height: 60px;
    padding-bottom: 2px;
    border-bottom: 1px solid #e5e5e5;
    font-size: 15px;
  }
  .breadcrumbs a {
    color: #666;
    font-weight: 300;
  }
  .breadcrumbs svg {
    width: 8px;
    height: 8px;
    color: #888;
  }
  .breadcrumbs strong {
    font-weight: 600;
  }
  .row {
    display: flex;
    justify-content: space-between;
    padding-top: 19px;
  }
  .intro {
    flex: 0 1 350px;
  }
  .settings {
    flex: 0 1 786px;
    min-width: 0;
  }
  h4 {
    margin-bottom: 10px;
    font-size: 26px;
    font-weight: 600;
    line-height: 36px;
  }
  h5,
  label {
    display: block;
    margin-bottom: 10px;
    font-size: 17px;
    font-weight: 600;
    line-height: 26px;
  }
  .settings > p {
    margin-bottom: 20px;
  }
  .key-box {
    display: flex;
    position: relative;
    height: 226px;
    margin: 20px 0 22px;
    border: 1px solid #80bdff;
    border-radius: 4px;
    box-shadow: 0 0 0 4px #bfdeff;
  }
  textarea {
    flex: 1;
    min-width: 0;
    padding: 8px 13px;
    border: 0;
    border-radius: 4px;
    outline: 0;
    overflow: hidden;
    resize: none;
    background: #fff;
    color: #202020;
    font: inherit;
    font-weight: 300;
    white-space: pre;
  }
  .squiggle {
    position: absolute;
    height: 3px;
    background: url("data:image/svg+xml,%3Csvg xmlns='http://www.w3.org/2000/svg' width='4' height='3'%3E%3Cpath d='M0 2.5L2 .5l2 2' fill='none' stroke='red'/%3E%3C/svg%3E");
  }
  .squiggle.first {
    top: 28px;
    left: 13px;
    width: 54px;
  }
  .squiggle.second {
    top: 132px;
    left: 229px;
    width: 62px;
  }
  .key-box .thumb {
    flex: 0 0 131px;
  }
  .key-box .scrollbar svg {
    width: 21px;
    height: 21px;
    background: #dcdcdc;
    stroke: #404040;
  }
  #title {
    display: block;
    width: 400px;
    max-width: 100%;
    height: 43px;
    padding: 0 13px;
    border: 1px solid #dfdfdf;
    border-radius: 4px;
    color: #202020;
    font: inherit;
    font-weight: 300;
  }
  label[for='title'] {
    margin-bottom: 9px;
  }
  .hint {
    margin: 6px 0 19px;
    color: #808080;
    font-size: 18px;
    font-weight: 300;
  }
  .submit {
    height: 43px;
    padding: 0 12px;
    border: 1px solid #168f48;
    border-radius: 4px;
    background: #1aaa55;
    color: #fff;
    font-size: 18px;
  }
  hr {
    margin: 30px 0 29px;
    border: 0;
    border-top: 1px solid #dfdfdf;
  }
  hr + h5 {
    margin-bottom: 8px;
  }
  .empty {
    height: 38px;
    border: 1px solid #fdd08f;
    border-radius: 3px;
    background: #fff1de;
    color: #c26700;
    line-height: 36px;
    text-align: center;
  }
  .watermark {
    position: absolute;
    right: 15px;
    bottom: 8px;
    color: #8a8a8a;
    font: 17px 'Liberation Sans', sans-serif;
    text-shadow: 1px 1px 0 #fff;
  }
</style>
